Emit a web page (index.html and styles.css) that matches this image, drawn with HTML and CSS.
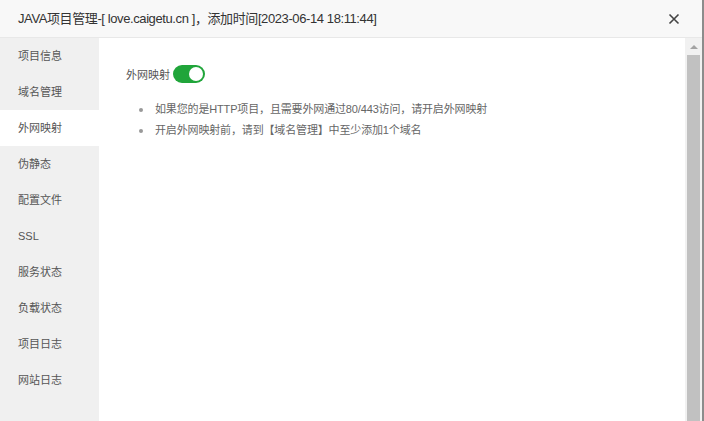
FILE: index.html
```html
<!DOCTYPE html>
<html lang="zh-CN">
<head>
    <meta charset="UTF-8">
    <meta name="viewport" content="width=device-width, initial-scale=1.0">
    <title>JAVA项目管理</title>
    <link rel="stylesheet" href="styles.css">
</head>
<body>
    <div class="layer">
        <div class="layer-title">
            <span class="title-text">JAVA项目管理-[ love.caigetu.cn ]，添加时间[2023-06-14 18:11:44]</span>
            <span class="layer-close">
                <svg width="12" height="12" viewBox="0 0 12 12"><path d="M1.5 1.5 L10.5 10.5 M10.5 1.5 L1.5 10.5" stroke="#444" stroke-width="1.6" fill="none"/></svg>
            </span>
        </div>
        <div class="layer-body">
            <div class="tab-nav">
                <div class="tab-item">项目信息</div>
                <div class="tab-item">域名管理</div>
                <div class="tab-item active">外网映射</div>
                <div class="tab-item">伪静态</div>
                <div class="tab-item">配置文件</div>
                <div class="tab-item">SSL</div>
                <div class="tab-item">服务状态</div>
                <div class="tab-item">负载状态</div>
                <div class="tab-item">项目日志</div>
                <div class="tab-item">网站日志</div>
            </div>
            <div class="tab-content">
                <div class="switch-row">
                    <span class="switch-label">外网映射</span>
                    <span class="switch on"><span class="knob"></span></span>
                </div>
                <ul class="help-list">
                    <li>如果您的是HTTP项目，且需要外网通过80/443访问，请开启外网映射</li>
                    <li>开启外网映射前，请到【域名管理】中至少添加1个域名</li>
                </ul>
            </div>
            <div class="scrollbar">
                <div class="scroll-up"></div>
                <div class="scroll-thumb"></div>
            </div>
        </div>
    </div>
</body>
</html>
```

FILE: styles.css
```css
body {
    margin: 0;
    background: #8c8c8c;
    font-family: "Liberation Sans", "Noto Sans CJK SC", sans-serif;
    overflow: hidden;
}
.layer {
    width: 702px;
    height: 421px;
    background: #fff;
    display: flex;
    flex-direction: column;
}
.layer-title {
    height: 37px;
    line-height: 37px;
    border-bottom: 1px solid #e8e8e8;
    background: #f8f8f8;
    padding: 0 22px 0 18px;
    font-size: 13px;
    color: #333;
    display: flex;
    justify-content: space-between;
    align-items: center;
}
.title-text {
    letter-spacing: -0.4px;
}
.layer-close {
    display: flex;
    align-items: center;
}
.layer-body {
    flex: 1;
    display: flex;
    min-height: 0;
}
.tab-nav {
    width: 99px;
    background: #f0f0f0;
}
.tab-item {
    height: 36px;
    line-height: 36px;
    padding-left: 18px;
    font-size: 11px;
    color: #555;
}
.tab-item.active {
    background: #fff;
}
.tab-content {
    flex: 1;
    padding: 26px 0 0 27px;
}
.switch-row {
    display: flex;
    align-items: center;
    height: 20px;
    gap: 3px;
}
.switch-label {
    font-size: 11px;
    color: #555;
}
.switch {
    width: 32px;
    height: 18px;
    border-radius: 9px;
    background: #20a53a;
    display: flex;
    align-items: center;
    justify-content: flex-end;
    padding: 0 2px;
    box-sizing: border-box;
}
.knob {
    width: 14px;
    height: 14px;
    border-radius: 50%;
    background: #fff;
}
.help-list {
    list-style: none;
    margin: 15px 0 0 0;
    padding: 0;
}
.help-list li {
    display: flex;
    align-items: center;
    font-size: 11px;
    line-height: 21px;
    color: #666;
    letter-spacing: -0.15px;
}
.help-list li::before {
    content: "";
    width: 4px;
    height: 4px;
    border-radius: 50%;
    background: #999;
    margin: 0 12px 0 13px;
}
.scrollbar {
    width: 17px;
    background: #f1f1f1;
    display: flex;
    flex-direction: column;
    align-items: center;
}
.scroll-up {
    width: 0;
    height: 0;
    margin: 7px 0 6px;
    border-left: 4px solid transparent;
    border-right: 4px solid transparent;
    border-bottom: 4px solid #a3a3a3;
}
.scroll-thumb {
    flex: 1;
    width: 13px;
    background: #c1c1c1;
}
```
